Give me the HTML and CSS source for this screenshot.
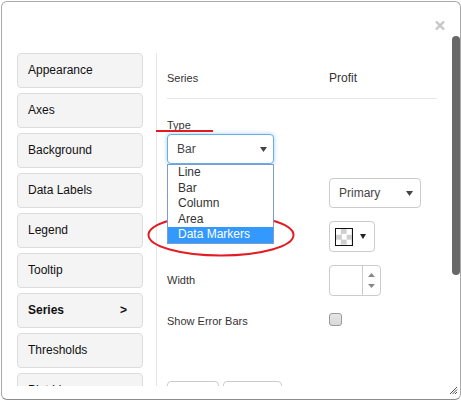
FILE: index.html
```html
<!DOCTYPE html>
<html>
<head>
<meta charset="utf-8">
<link rel="stylesheet" href="styles.css">
</head>
<body>
<div class="frame">
  <div class="topbar">
    <span class="close" aria-label="Close">
      <svg width="10" height="9" viewBox="0 0 10 9"><path d="M1 0.5 L9 8.5 M9 0.5 L1 8.5" stroke="#c6c6c6" stroke-width="2.4" fill="none"/></svg>
    </span>
  </div>
  <div class="scroller">
    <div class="layout">
      <nav class="tabs">
        <div class="tab">Appearance</div>
        <div class="tab">Axes</div>
        <div class="tab">Background</div>
        <div class="tab">Data Labels</div>
        <div class="tab">Legend</div>
        <div class="tab">Tooltip</div>
        <div class="tab active"><span>Series</span><span class="chev">&gt;</span></div>
        <div class="tab">Thresholds</div>
        <div class="tab">Plot Lines</div>
      </nav>
      <section class="panel">
        <div class="head"><span class="col-label">Series</span><span class="col-value">Profit</span></div>
        <div class="type-label">Type</div>
        <div class="type-wrap">
          <div class="select focus"><span>Bar</span><svg class="caret" width="7" height="5" viewBox="0 0 7 5"><path d="M0 0 H7 L3.5 5 Z" fill="#444"/></svg></div>
          <ul class="listbox">
            <li>Line</li>
            <li>Bar</li>
            <li>Column</li>
            <li>Area</li>
            <li class="sel">Data Markers</li>
          </ul>
        </div>
        <div class="row r-axis"><span class="col-label lbl">Axis</span>
          <div class="select primary"><span>Primary</span><svg class="caret" width="7" height="5" viewBox="0 0 7 5"><path d="M0 0 H7 L3.5 5 Z" fill="#444"/></svg></div>
        </div>
        <div class="row r-color"><span class="col-label lbl">Color</span>
          <div class="color-btn"><span class="swatch"></span><svg width="6" height="5" viewBox="0 0 6 5"><path d="M0 0 H6 L3 5 Z" fill="#222"/></svg></div>
        </div>
        <div class="row r-width"><span class="col-label lbl">Width</span>
          <div class="spin"><span class="spin-field"></span><span class="spin-btns">
            <svg width="7" height="4" viewBox="0 0 7 4"><path d="M0 4 H7 L3.5 0 Z" fill="#888"/></svg>
            <svg width="7" height="4" viewBox="0 0 7 4"><path d="M0 0 H7 L3.5 4 Z" fill="#888"/></svg>
          </span></div>
        </div>
        <div class="row r-check"><span class="col-label lbl check-lbl">Show Error Bars</span><span class="checkbox"></span></div>
        <div class="buttons"><span class="btn b1"></span><span class="btn b2"></span></div>
      </section>
    </div>
  </div>
  <div class="thumb"></div>
  <svg class="grip" width="9" height="9" viewBox="0 0 9 9">
    <path d="M8 1 L1 8 M8 3.5 L3.5 8 M8 6 L6 8" stroke="#555" stroke-width="1" fill="none"/>
  </svg>
</div>
<svg class="annot" width="461" height="401" viewBox="0 0 461 401">
  <rect x="156" y="130" width="57" height="2" fill="#e31b23"/>
  <ellipse cx="221" cy="235" rx="72.5" ry="20.5" fill="none" stroke="#e31b23" stroke-width="2"/>
</svg>
</body>
</html>
```

FILE: styles.css
```css
* { box-sizing: border-box; }
html, body { margin: 0; padding: 0; background: #fff; }
body {
  position: relative;
  width: 461px;
  height: 401px;
  overflow: hidden;
  font-family: "Liberation Sans", Arial, sans-serif;
  color: #333;
}
.frame {
  position: relative;
  margin: 1px 0 0 1px;
  width: 460px;
  height: 399px;
  border: 1px solid #a9a9a9;
  border-bottom-color: #8c8c8c;
  border-radius: 6px;
  background: #fff;
  overflow: hidden;
}
.topbar {
  height: 34px;
  display: flex;
  justify-content: flex-end;
  align-items: flex-start;
  padding: 19px 15px 0 0;
}
.close { display: block; width: 10px; height: 9px; }
.close svg { display: block; }
.scroller {
  height: 350px;
  overflow: hidden;
}
.layout {
  display: flex;
  align-items: stretch;
  padding: 17px 0 0 15px;
  height: 600px;
}
.tabs {
  width: 126px;
  display: flex;
  flex-direction: column;
  gap: 5px;
  flex: none;
}
.tab {
  height: 35px;
  background: #f4f4f4;
  border: 1px solid #dcdcdc;
  border-radius: 4px;
  font-size: 12px;
  line-height: 33px;
  padding: 0 15px 0 10px;
  color: #111;
  display: flex;
  justify-content: space-between;
}
.tab.active { font-weight: bold; }
.chev { font-weight: bold; padding-right: 0; }
.panel {
  margin-left: 13px;
  border-left: 1px solid #e6e6e6;
  padding-left: 10px;
  width: 281px;
  flex: none;
}
.head {
  display: flex;
  align-items: center;
  height: 46px;
  padding-top: 5px;
  border-bottom: 1px solid #e6e6e6;
  width: 270px;
}
.col-label { width: 162px; flex: none; font-size: 11px; color: #333; }
.col-value { font-size: 12px; color: #333; }
.type-label {
  margin-top: 20px;
  font-size: 11px;
  line-height: 13px;
  color: #333;
}
.type-wrap {
  position: relative;
  margin-top: 2px;
  width: 107px;
}
.select {
  height: 30px;
  border: 1px solid #ccc;
  border-radius: 4px;
  display: flex;
  align-items: center;
  justify-content: space-between;
  padding: 0 6px 0 9px;
  font-size: 12px;
  color: #444;
  background: #fff;
}
.select.focus {
  border-color: #66afe9;
  box-shadow: 0 0 4px rgba(102, 175, 233, 0.6);
}
.caret { display: block; }
.listbox {
  position: absolute;
  top: 30px;
  left: 0;
  width: 107px;
  margin: 0;
  padding: 0;
  list-style: none;
  border: 1px solid #7c9ccf;
  background: #fff;
  z-index: 2;
}
.listbox li {
  font-size: 12px;
  line-height: 15.5px;
  height: 15.5px;
  padding-left: 10px;
  color: #333;
}
.listbox li.sel { background: #3399ff; color: #fff; }
.row {
  display: flex;
  align-items: center;
}
.r-axis { margin-top: 14px; }
.r-color { margin-top: 13px; }
.r-width { margin-top: 13px; }
.r-check { margin-top: 17px; align-items: flex-start; }
.lbl { font-size: 11px; line-height: 13px; }
.check-lbl { margin-top: 2px; }
.primary { width: 92px; padding-left: 9px; padding-right: 7px; }
.color-btn {
  width: 46px;
  height: 31px;
  border: 1px solid #ccc;
  border-radius: 4px;
  display: flex;
  align-items: center;
  gap: 7px;
  padding-left: 5px;
  background: #fff;
}
.color-btn svg { display: block; }
.swatch {
  width: 18px;
  height: 18px;
  border: 1px solid #111;
  background: repeating-conic-gradient(#cfcfcf 0 25%, #fff 0 50%) 0 0 / 10.67px 10.67px;
}
.spin {
  width: 52px;
  height: 31px;
  border: 1px solid #ccc;
  border-radius: 4px;
  display: flex;
}
.spin-field { width: 33px; border-right: 1px solid #ccc; }
.spin-btns {
  flex: 1;
  display: flex;
  flex-direction: column;
  align-items: center;
  justify-content: space-between;
  padding: 7px 0 7px;
}
.spin-btns svg { display: block; }
.checkbox {
  width: 13px;
  height: 13px;
  border: 1px solid #9a9a9a;
  border-radius: 3px;
  background: linear-gradient(#e6e6e6, #d9d9d9);
}
.buttons {
  margin-top: 53px;
  display: flex;
  gap: 4px;
}
.btn {
  height: 30px;
  border: 1px solid #ccc;
  border-radius: 4px;
  background: #fff;
}
.b1 { width: 52px; }
.b2 { width: 59px; }
.thumb {
  position: absolute;
  left: 450px;
  top: 34px;
  width: 8px;
  height: 239px;
  border-radius: 4px;
  background: #686868;
}
.grip {
  position: absolute;
  left: 447px;
  top: 384px;
}
.annot {
  position: absolute;
  left: 0;
  top: 0;
  pointer-events: none;
}
```
